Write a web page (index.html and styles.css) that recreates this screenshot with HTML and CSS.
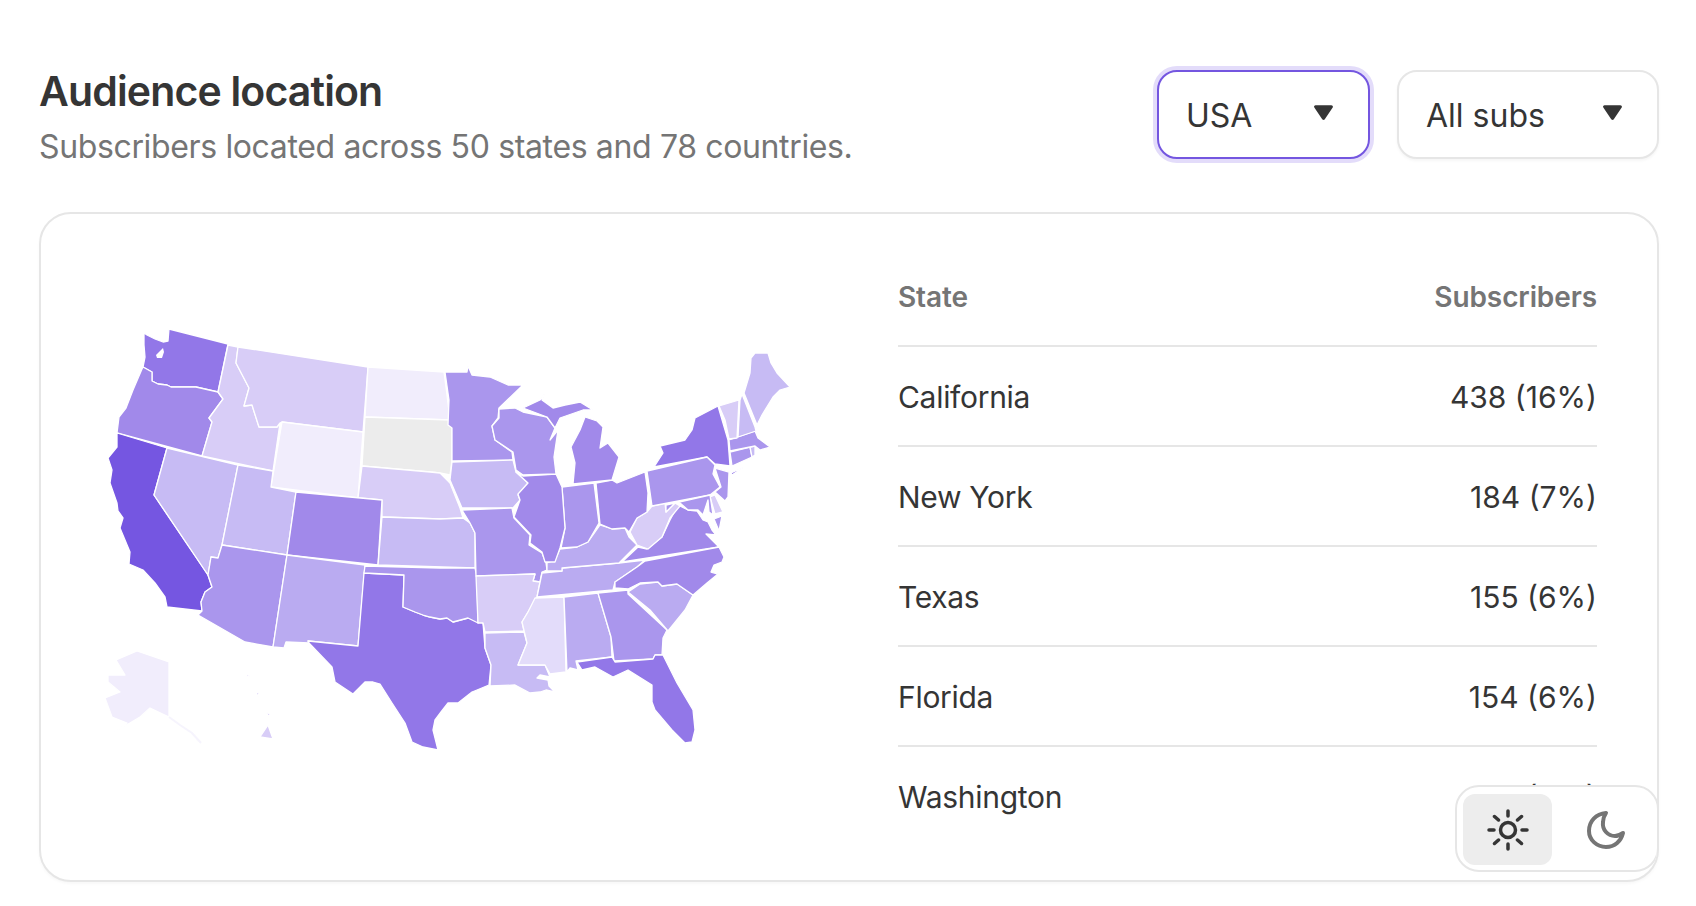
FILE: index.html
```html
<!DOCTYPE html>
<html lang="en">
<head>
<meta charset="utf-8">
<title>Audience location</title>
<link rel="stylesheet" href="styles.css">
</head>
<body>
<main class="page">
  <header class="head">
    <div class="titles">
      <h1 class="title">Audience location</h1>
      <p class="subtitle">Subscribers located across 50 states and 78 countries.</p>
    </div>
    <div class="filters">
      <div class="select select-country focused"><span>USA</span><svg class="caret" viewBox="0 0 20 16"><path d="M2.5 2.5h15L10 13.5z"/></svg></div>
      <div class="select select-subs"><span>All subs</span><svg class="caret" viewBox="0 0 20 16"><path d="M2.5 2.5h15L10 13.5z"/></svg></div>
    </div>
  </header>
  <section class="card">
    <svg class="map" viewBox="90 310 720 460" aria-label="Map of USA">
      <g class="states">
        <polygon class="s3" points="144,333 147,335 155,339 163,342 168,341 169,329 228,344 218,392 196,387 171,387 167,385 158,384 152,381 152,372 143,367 145,357 144,345"/>
        <polygon class="s4" points="142,369 143,367 152,372 152,381 158,384 167,385 171,387 196,387 218,392 223,399 209,418 212,422 202,456 117,433 119,417 126,408 133,390"/>
        <polygon class="s1" points="117,433 167,448 154,495 208,575 212,587 205,592 201,602 202,611 167,607 165,597 155,583 143,570 129,564 130,552 120,528 123,518 118,511 117,503 110,483 112,470 108,458 117,447"/>
        <polygon class="s7" points="167,448 238,465 222,545 218,558 211,557 208,575 154,495"/>
        <polygon class="s8" points="228,345 238,347 236,363 249,388 244,406 252,405 259,427 277,427 280,423 273,471 202,456 212,422 209,418 223,399 218,392"/>
        <polygon class="s8" points="238,347 368,367 363,432 282,422 280,423 277,427 259,427 252,405 244,406 249,388 236,363"/>
        <polygon class="s10" points="282,422 363,432 358,498 271,487"/>
        <polygon class="s10" points="368,367 444,372 447,395 450,420 365,417"/>
        <polygon class="s0" points="365,417 450,420 452,422 452,460 450,475 440,473 430,472 362,466"/>
        <polygon class="s8" points="362,466 430,472 440,473 450,483 460,508 463,518 440,519 382,517 382,500 358,498"/>
        <polygon class="s7" points="238,465 273,471 271,487 296,492 287,555 222,545"/>
        <polygon class="s4" points="296,492 382,500 378,565 287,555"/>
        <polygon class="s7" points="382,517 440,519 463,518 470,523 475,533 475,568 378,565"/>
        <polygon class="s5" points="222,545 287,555 273,647 245,642 198,615 202,611 201,602 205,592 212,587 208,575 211,557 218,558"/>
        <polygon class="s6" points="287,555 365,565 358,646 308,641 309,643 286,642 284,648 273,647"/>
        <polygon class="s3" points="364,573 404,575 403,607 415,612 423,615 430,617 440,619 447,618 453,622 468,618 483,623 485,648 491,665 489,685 477,690 472,692 458,703 448,703 441,712 435,720 433,730 438,750 423,747 412,742 405,723 392,703 380,684 373,682 365,682 353,694 335,682 332,667 309,643 308,641 358,646"/>
        <polygon class="s5" points="365,566 440,568 475,568 477,577 478,623 468,618 453,622 447,618 440,619 430,617 423,615 415,612 403,607 404,575 364,573"/>
        <polygon class="s5" points="445,372 467,372 468,366 472,375 490,377 508,385 523,385 499,408 498,418 492,426 495,440 512,452 513,460 452,461 452,428 448,425 449,400"/>
        <polygon class="s7" points="452,462 513,460 516,472 528,483 518,495 520,500 513,508 462,508 450,480"/>
        <polygon class="s5" points="462,510 512,508 514,518 530,535 529,545 542,553 546,563 547,570 542,572 540,582 533,581 535,574 476,576 475,533 470,523"/>
        <polygon class="s8" points="476,576 535,574 533,581 540,582 537,597 528,612 522,622 524,631 485,632 483,623 478,623"/>
        <polygon class="s7" points="485,633 524,632 527,643 518,665 545,665 550,677 540,675 537,678 548,680 549,686 555,692 546,690 540,692 530,693 515,685 490,686 491,665 485,648"/>
        <polygon class="s9" points="535,598 564,597 566,672 550,674 545,665 518,665 527,643 522,622 528,612"/>
        <polygon class="s6" points="564,597 598,593 611,637 612,657 576,661 578,670 570,668 567,672"/>
        <polygon class="s5" points="598,593 628,590 628,594 667,630 663,638 662,655 655,655 653,659 614,661 611,637"/>
        <polygon class="s6" points="628,592 640,584 658,582 662,586 677,584 693,595 685,610 668,631 650,610"/>
        <polygon class="s3" points="577,662 612,657 615,662 653,659 655,655 663,655 677,683 693,710 695,730 692,742 685,743 672,730 655,710 652,702 652,685 628,670 613,677 595,667 582,670"/>
        <polygon class="s6" points="537,597 542,573 562,571 562,568 619,563 645,560 637,567 615,582 613,590"/>
        <polygon class="s6" points="547,571 547,563 555,560 560,549 577,547 588,542 600,525 612,529 625,528 629,537 637,545 619,563 562,568 562,571"/>
        <polygon class="s4" points="622,562 638,547 647,549 662,537 670,520 678,505 688,510 697,511 703,520 708,522 712,530 716,535 706,534 719,547"/>
        <polygon class="s5" points="714,519 722,516 719,531"/>
        <polygon class="s4" points="645,561 719,547 724,557 722,562 714,565 711,572 718,574 707,583 693,595 677,584 662,586 658,582 640,583 628,589 615,588 615,582 637,567"/>
        <polygon class="s8" points="630,532 637,518 647,512 652,506 665,503 666,512 675,503 680,506 670,518 662,537 648,549 637,545"/>
        <polygon class="s4" points="596,483 612,480 617,483 645,472 648,493 647,512 637,518 629,532 625,528 612,529 600,524"/>
        <polygon class="s5" points="562,487 594,483 599,523 588,542 577,547 561,548 565,528"/>
        <polygon class="s4" points="523,476 556,474 562,487 565,528 560,548 555,562 545,562 542,552 530,543 531,535 514,517 520,500 518,494 528,483 516,472"/>
        <polygon class="s5" points="499,409 515,408 523,412 547,417 555,428 550,440 558,430 554,457 556,474 523,475 516,470 513,452 495,440 492,426 499,418"/>
        <polygon class="s4" points="523,408 540,400 545,393 542,400 553,408 565,405 580,402 593,410 583,410 560,418 555,428 547,417"/>
        <polygon class="s4" points="585,417 597,421 603,427 600,448 608,443 619,457 612,480 573,484 575,463 571,447 580,430"/>
        <polygon class="s3" points="654,467 663,453 660,446 685,440 692,430 695,418 718,406 728,440 730,466 715,464 707,457"/>
        <polygon class="s3" points="731,473 744,467 732,475"/>
        <polygon class="s5" points="647,471 707,457 715,465 713,474 720,487 710,495 652,506"/>
        <polygon class="s5" points="715,468 729,472 728,497 725,501 715,492 721,487"/>
        <polygon class="s8" points="710,497 715,495 723,512 715,514"/>
        <polygon class="s5" points="666,505 710,495 713,515 709,512 708,500 703,515 698,510 688,510 680,503 675,503 666,512"/>
        <polygon class="s5" points="730,452 750,447 752,457 732,466"/>
        <polygon class="s7" points="750,447 755,446 755,455 752,457"/>
        <polygon class="s5" points="729,440 755,431 758,438 770,447 760,450 755,446 730,451"/>
        <polygon class="s8" points="719,406 739,400 737,438 729,439 725,420"/>
        <polygon class="s7" points="742,394 755,427 756,431 738,437 740,400"/>
        <polygon class="s7" points="744,393 750,373 751,358 755,353 768,353 771,363 777,373 790,387 780,390 773,397 762,415 757,425"/>
        <polygon class="s10" points="137,651 169,662 169,717 150,708 140,717 113,733 127,723 112,717 105,698 120,692 108,682 108,675 125,675 116,660"/>
        <polygon class="s8" points="260,737 268,725 273,739"/>
        <polygon class="s8" points="266,712 270,714 269,717"/>
        <polygon class="s8" points="256,692 259,693 258,697"/>
        <polygon class="s8" points="246,674 250,676 247,677"/>
      </g>
      <polygon class="sound" points="163,348 156,355 157,358 162,358 164,352"/>
      <polyline class="tail" points="169,717 180,725 192,733 201,743"/>
    </svg>
    <div class="table">
      <div class="row row-head"><span>State</span><span>Subscribers</span></div>
      <div class="row"><span>California</span><span class="value">438 (16%)</span></div>
      <div class="row"><span>New York</span><span class="value">184 (7%)</span></div>
      <div class="row"><span>Texas</span><span class="value">155 (6%)</span></div>
      <div class="row"><span>Florida</span><span class="value">154 (6%)</span></div>
      <div class="row row-last"><span>Washington</span><span class="value">113 (4%)</span></div>
    </div>
    <div class="theme">
      <button class="theme-btn active" aria-label="Light">
        <svg class="icon" viewBox="0 0 44 44"><circle cx="22" cy="22" r="7.5"/><path d="M22 3v5M22 36v5M3 22h5M36 22h5M8.5 8.5l4 3.500M35.500 8.500l-4 3.500M8.500 35.500l4-3.500M35.500 35.500l-4-3.500"/></svg>
      </button>
      <button class="theme-btn" aria-label="Dark">
        <svg class="icon icon-moon" viewBox="0 0 44 44"><path d="M22 5C12 6 5 13 5 23c0 9 8 16 17 16 9 0 15-6 17-14-3 2-5 3-8 3-7 0-13-6-12-14 0-3 1-6 3-9z"/></svg>
      </button>
    </div>
  </section>
</main>
</body>
</html>
```
FILE: styles.css
```css
* { box-sizing: border-box; }
html, body { margin: 0; height: 100%; background: #fff; overflow: hidden; }
body { font-family: Inter, "Liberation Sans", sans-serif; color: #353535; }
.page { padding: 69px 37px 0 39px; }
.head { display: flex; justify-content: space-between; align-items: flex-start; height: 143px; }
.title { margin: 0; font-size: 41px; line-height: 44px; font-weight: 600; letter-spacing: -0.85px; color: #353535; }
.subtitle { margin: 14px 0 0; font-size: 32px; line-height: 40px; color: #757575; letter-spacing: -0.36px; }
.filters { display: flex; gap: 27px; margin-top: 1px; }
.select { height: 89px; display: flex; align-items: center; justify-content: space-between; background: #fff; border: 2px solid #e6e6e6; border-radius: 20px; font-size: 32px; color: #353535; padding: 2px 34px 0 27px; box-shadow: 0 2px 3px rgba(0,0,0,.04); }
.select-country { width: 213px; }
.select-subs { width: 262px; }
.focused { border-color: #7456e0; box-shadow: 0 0 0 4px #e3dcfa; }
.caret { width: 21px; height: 17px; fill: #353535; stroke: #353535; stroke-width: 3; stroke-linejoin: round; margin-top: -6px; }
.card { position: relative; height: 670px; border: 2px solid #e6e6e6; border-radius: 32px; display: flex; justify-content: space-between; padding: 0 60px 0 49px; overflow: hidden; box-shadow: 0 2px 3px rgba(0,0,0,.03); background: #fff; }
.map { width: 720px; height: 460px; margin-top: 96px; flex: none; }
.states polygon { stroke: #fff; stroke-width: 1.3; stroke-linejoin: round; }
.s0 { fill: #ececec; }
.s1 { fill: #7556e1; }
.s3 { fill: #9277e8; }
.s4 { fill: #a189ea; }
.s5 { fill: #aa96ed; }
.s6 { fill: #baabf1; }
.s7 { fill: #c7bbf4; }
.s8 { fill: #d8cdf7; }
.s9 { fill: #e3dcfa; }
.s10 { fill: #f1edfc; }
.sound { fill: #fff; }
.tail { fill: none; stroke: #f6f4fd; stroke-width: 2; }
.table { width: 699px; flex: none; padding-top: 33px; }
.row { display: flex; justify-content: space-between; align-items: center; height: 100px; border-bottom: 2px solid #e6e6e6; font-size: 30px; letter-spacing: -0.3px; color: #353535; padding-top: 2px; }
.value { letter-spacing: 0; }
.row-head { font-weight: 600; font-size: 28px; color: #757575; letter-spacing: -0.1px; }
.row-last { border-bottom: 0; padding-top: 0; }
.theme { position: absolute; right: -2px; bottom: 8px; width: 204px; height: 87px; display: flex; gap: 9px; padding: 7px 6px; background: #fff; border: 2px solid #e6e6e6; border-radius: 24px; }
.theme-btn { width: 89px; height: 71px; border: 0; border-radius: 12px; background: #fff; padding: 0; display: flex; align-items: center; justify-content: center; }
.theme-btn.active { background: #ededed; }
.icon { width: 44px; height: 44px; fill: none; stroke: #353535; stroke-width: 3.500; stroke-linecap: round; stroke-linejoin: round; }
.icon-moon { stroke: #757575; stroke-width: 4; }
```
